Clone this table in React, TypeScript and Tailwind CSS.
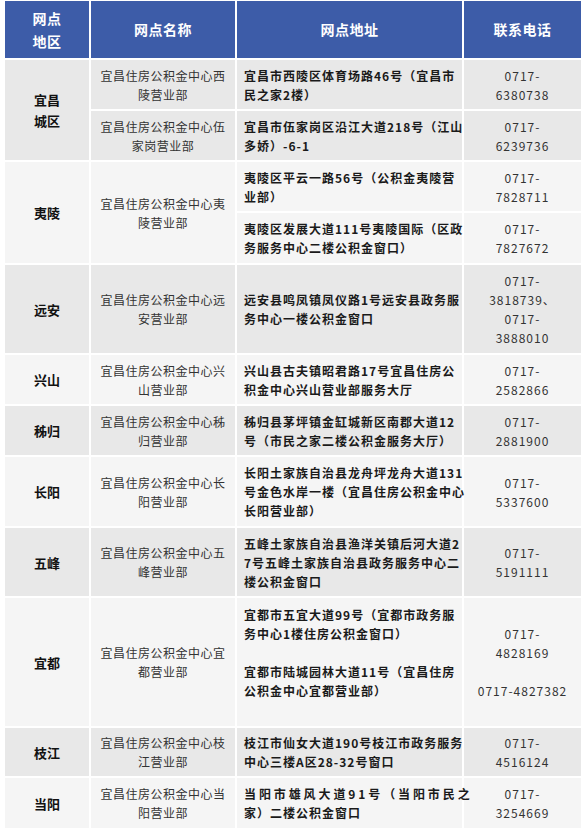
import React from "react";

const DARK = "bg-[#e8e8e8]";
const LIGHT = "bg-[#f5f5f5]";

function Lines({ lines }: { lines: string[] }) {
  return (
    <>
      {lines.map((l, i) => (
        <div key={i} className="h-[19px] whitespace-nowrap">
          {l === "" ? "\u00a0" : l}
        </div>
      ))}
    </>
  );
}

function RegionCell({ text, rowSpan, bg }: { text: string[]; rowSpan?: number; bg: string }) {
  return (
    <td
      rowSpan={rowSpan}
      className={`${bg} border-r-2 border-b-2 border-white text-center align-middle text-[13px] font-bold leading-[21px] text-[#111]`}
    >
      {text.map((t, i) => (
        <div key={i}>{t}</div>
      ))}
    </td>
  );
}

function NameCell({ a, b, rowSpan, bg, last }: { a: string; b: string; rowSpan?: number; bg: string; last?: boolean }) {
  return (
    <td
      rowSpan={rowSpan}
      className={`${bg} border-r-2 ${last ? "" : "border-b-2"} border-white text-center align-middle text-[12px] leading-[19px] tracking-[0.5px] text-[#333]`}
    >
      <Lines lines={[`宜昌住房公积金中心${a}`, `${b}营业部`]} />
    </td>
  );
}

function AddrCell({ lines, bg, last, justifyFirst }: { lines: string[]; bg: string; last?: boolean; justifyFirst?: boolean }) {
  return (
    <td
      className={`${bg} border-r-2 ${last ? "" : "border-b-2"} border-white pl-[7px] pr-[4px] text-left align-middle text-[12px] font-bold leading-[19px] tracking-[1px] text-[#1a1a1a]`}
    >
      {lines.map((l, i) => (
        <div
          key={i}
          className={`h-[19px] whitespace-nowrap ${justifyFirst && i === 0 ? "tracking-[2.9px]" : ""}`}
        >
          {l === "" ? "\u00a0" : l}
        </div>
      ))}
    </td>
  );
}

function PhoneCell({ lines, bg, last }: { lines: string[]; bg: string; last?: boolean }) {
  return (
    <td
      className={`${bg} ${last ? "" : "border-b-2"} border-white text-center align-middle text-[12px] leading-[19px] tracking-[1px] text-[#333]`}
    >
      <Lines lines={lines} />
    </td>
  );
}

export default function App() {
  return (
    <div className="w-[586px] min-h-[834px] bg-white pl-[5px] pt-[1px] font-['Noto_Sans_CJK_SC','Noto_Sans',sans-serif]">
      <table className="w-[576px] table-fixed border-separate border-spacing-0">
        <colgroup>
          <col className="w-[86px]" />
          <col className="w-[146px]" />
          <col className="w-[227px]" />
          <col className="w-[117px]" />
        </colgroup>
        <thead>
          <tr className="h-[59px]">
            <th className="bg-[#3d5ca8] border-r-2 border-b-2 border-white text-center align-middle text-[14px] font-bold leading-[23px] tracking-[0.5px] text-white">
              <div>网点</div>
              <div>地区</div>
            </th>
            <th className="bg-[#3d5ca8] border-r-2 border-b-2 border-white text-center align-middle text-[14px] font-bold tracking-[0.5px] text-white">
              网点名称
            </th>
            <th className="bg-[#3d5ca8] border-r-2 border-b-2 border-white text-center align-middle text-[14px] font-bold tracking-[0.5px] text-white">
              网点地址
            </th>
            <th className="bg-[#3d5ca8] border-b-2 border-white text-center align-middle text-[14px] font-bold tracking-[0.5px] text-white">
              联系电话
            </th>
          </tr>
        </thead>
        <tbody>
          <tr className="h-[51px]">
            <RegionCell text={["宜昌", "城区"]} rowSpan={2} bg={DARK} />
            <NameCell a="西" b="陵" bg={DARK} />
            <AddrCell lines={["宜昌市西陵区体育场路46号（宜昌市", "民之家2楼）"]} bg={DARK} />
            <PhoneCell lines={["0717-", "6380738"]} bg={DARK} />
          </tr>
          <tr className="h-[51px]">
            <NameCell a="伍" b="家岗" bg={DARK} />
            <AddrCell lines={["宜昌市伍家岗区沿江大道218号（江山", "多娇）-6-1"]} bg={DARK} />
            <PhoneCell lines={["0717-", "6239736"]} bg={DARK} />
          </tr>
          <tr className="h-[51px]">
            <RegionCell text={["夷陵"]} rowSpan={2} bg={LIGHT} />
            <NameCell a="夷" b="陵" rowSpan={2} bg={LIGHT} />
            <AddrCell lines={["夷陵区平云一路56号（公积金夷陵营", "业部）"]} bg={LIGHT} />
            <PhoneCell lines={["0717-", "7828711"]} bg={LIGHT} />
          </tr>
          <tr className="h-[52px]">
            <AddrCell lines={["夷陵区发展大道111号夷陵国际（区政", "务服务中心二楼公积金窗口）"]} bg={LIGHT} />
            <PhoneCell lines={["0717-", "7827672"]} bg={LIGHT} />
          </tr>
          <tr className="h-[90px]">
            <RegionCell text={["远安"]} bg={DARK} />
            <NameCell a="远" b="安" bg={DARK} />
            <AddrCell lines={["远安县鸣凤镇凤仪路1号远安县政务服", "务中心一楼公积金窗口"]} bg={DARK} />
            <PhoneCell lines={["0717-", "3818739、", "0717-", "3888010"]} bg={DARK} />
          </tr>
          <tr className="h-[51px]">
            <RegionCell text={["兴山"]} bg={LIGHT} />
            <NameCell a="兴" b="山" bg={LIGHT} />
            <AddrCell lines={["兴山县古夫镇昭君路17号宜昌住房公", "积金中心兴山营业部服务大厅"]} bg={LIGHT} />
            <PhoneCell lines={["0717-", "2582866"]} bg={LIGHT} />
          </tr>
          <tr className="h-[51px]">
            <RegionCell text={["秭归"]} bg={DARK} />
            <NameCell a="秭" b="归" bg={DARK} />
            <AddrCell lines={["秭归县茅坪镇金缸城新区南郡大道12", "号（市民之家二楼公积金服务大厅）"]} bg={DARK} />
            <PhoneCell lines={["0717-", "2881900"]} bg={DARK} />
          </tr>
          <tr className="h-[71px]">
            <RegionCell text={["长阳"]} bg={LIGHT} />
            <NameCell a="长" b="阳" bg={LIGHT} />
            <AddrCell
              lines={["长阳土家族自治县龙舟坪龙舟大道131", "号金色水岸一楼（宜昌住房公积金中心", "长阳营业部）"]}
              bg={LIGHT}
            />
            <PhoneCell lines={["0717-", "5337600"]} bg={LIGHT} />
          </tr>
          <tr className="h-[70px]">
            <RegionCell text={["五峰"]} bg={DARK} />
            <NameCell a="五" b="峰" bg={DARK} />
            <AddrCell
              lines={["五峰土家族自治县渔洋关镇后河大道2", "7号五峰土家族自治县政务服务中心二", "楼公积金窗口"]}
              bg={DARK}
            />
            <PhoneCell lines={["0717-", "5191111"]} bg={DARK} />
          </tr>
          <tr className="h-[130px]">
            <RegionCell text={["宜都"]} bg={LIGHT} />
            <NameCell a="宜" b="都" bg={LIGHT} />
            <AddrCell
              lines={[
                "宜都市五宜大道99号（宜都市政务服",
                "务中心1楼住房公积金窗口）",
                "",
                "宜都市陆城园林大道11号（宜昌住房",
                "公积金中心宜都营业部）",
                "",
              ]}
              bg={LIGHT}
            />
            <PhoneCell lines={["0717-", "4828169", "", "0717-4827382"]} bg={LIGHT} />
          </tr>
          <tr className="h-[50px]">
            <RegionCell text={["枝江"]} bg={DARK} />
            <NameCell a="枝" b="江" bg={DARK} />
            <AddrCell lines={["枝江市仙女大道190号枝江市政务服务", "中心三楼A区28-32号窗口"]} bg={DARK} />
            <PhoneCell lines={["0717-", "4516124"]} bg={DARK} />
          </tr>
          <tr className="h-[50px]">
            <td className={`${LIGHT} border-r-2 border-white text-center align-middle text-[13px] font-bold leading-[21px] text-[#111]`}>
              当阳
            </td>
            <NameCell a="当" b="阳" bg={LIGHT} last />
            <AddrCell lines={["当阳市雄风大道91号（当阳市民之", "家）二楼公积金窗口"]} bg={LIGHT} last justifyFirst />
            <PhoneCell lines={["0717-", "3254669"]} bg={LIGHT} last />
          </tr>
        </tbody>
      </table>
    </div>
  );
}
